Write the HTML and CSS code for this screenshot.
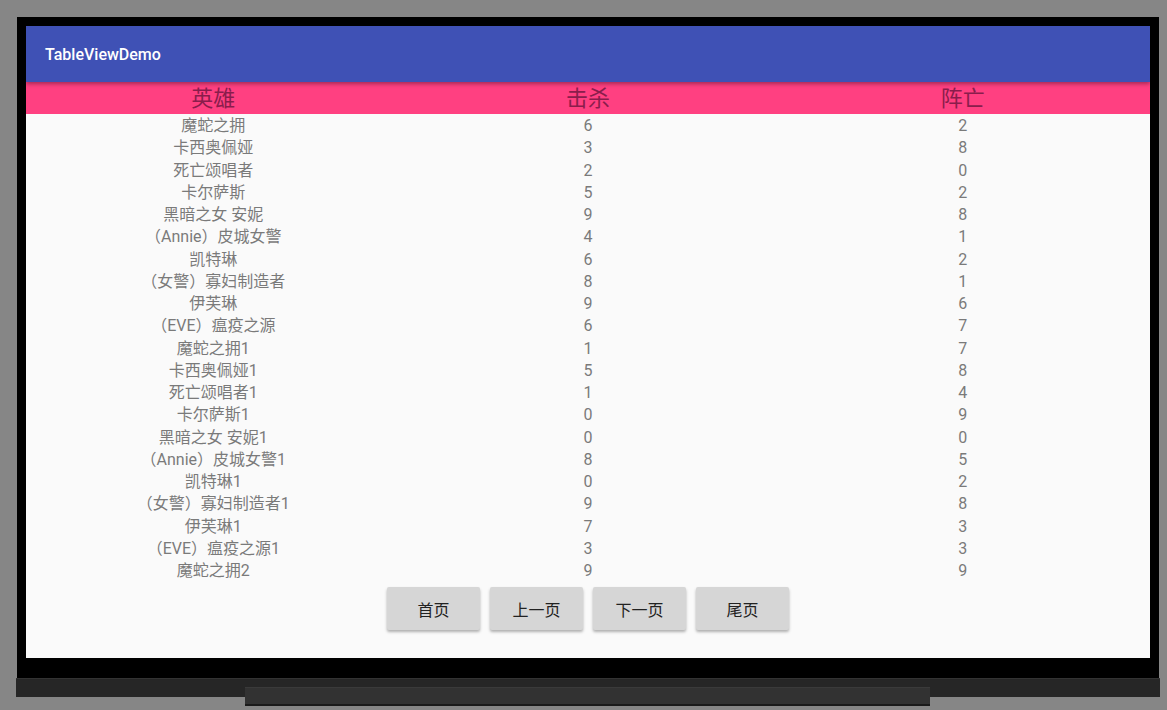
FILE: index.html
```html
<!DOCTYPE html>
<html>
<head>
<meta charset="utf-8">
<link rel="stylesheet" href="styles.css">
</head>
<body>
<div class="device">
  <div class="bezel">
    <div class="screen">
      <div class="toolbar">TableViewDemo</div>
      <div class="table-head">
        <div>英雄</div><div>击杀</div><div>阵亡</div>
      </div>
      <div class="table-body">
        <div class="row"><div>魔蛇之拥</div><div>6</div><div>2</div></div>
        <div class="row"><div>卡西奥佩娅</div><div>3</div><div>8</div></div>
        <div class="row"><div>死亡颂唱者</div><div>2</div><div>0</div></div>
        <div class="row"><div>卡尔萨斯</div><div>5</div><div>2</div></div>
        <div class="row"><div>黑暗之女 安妮</div><div>9</div><div>8</div></div>
        <div class="row"><div>（Annie）皮城女警</div><div>4</div><div>1</div></div>
        <div class="row"><div>凯特琳</div><div>6</div><div>2</div></div>
        <div class="row"><div>（女警）寡妇制造者</div><div>8</div><div>1</div></div>
        <div class="row"><div>伊芙琳</div><div>9</div><div>6</div></div>
        <div class="row"><div>（EVE）瘟疫之源</div><div>6</div><div>7</div></div>
        <div class="row"><div>魔蛇之拥1</div><div>1</div><div>7</div></div>
        <div class="row"><div>卡西奥佩娅1</div><div>5</div><div>8</div></div>
        <div class="row"><div>死亡颂唱者1</div><div>1</div><div>4</div></div>
        <div class="row"><div>卡尔萨斯1</div><div>0</div><div>9</div></div>
        <div class="row"><div>黑暗之女 安妮1</div><div>0</div><div>0</div></div>
        <div class="row"><div>（Annie）皮城女警1</div><div>8</div><div>5</div></div>
        <div class="row"><div>凯特琳1</div><div>0</div><div>2</div></div>
        <div class="row"><div>（女警）寡妇制造者1</div><div>9</div><div>8</div></div>
        <div class="row"><div>伊芙琳1</div><div>7</div><div>3</div></div>
        <div class="row"><div>（EVE）瘟疫之源1</div><div>3</div><div>3</div></div>
        <div class="row"><div>魔蛇之拥2</div><div>9</div><div>9</div></div>
      </div>
      <div class="pager">
        <button class="btn">首页</button>
        <button class="btn">上一页</button>
        <button class="btn">下一页</button>
        <button class="btn">尾页</button>
      </div>
    </div>
  </div>
  <div class="chin"></div>
  <div class="stand"></div>
</div>
</body>
</html>
```

FILE: styles.css
```css
html, body {
  margin: 0;
  padding: 0;
  background: #868686;
  width: 1167px;
  height: 710px;
  overflow: hidden;
  font-family: Roboto, "Noto Sans CJK SC", sans-serif;
}

.device {
  display: flex;
  flex-direction: column;
  margin: 17px 0 0 16px;
  width: 1144px;
}

.bezel {
  background: #000;
  padding: 9px 9px 20px 9px;
  margin-left: 1px;
  width: 1124px;
}

.screen {
  width: 1124px;
  height: 632px;
  background: #fafafa;
  display: flex;
  flex-direction: column;
}

.toolbar {
  height: 56px;
  background: #3f51b5;
  color: #fff;
  font-size: 16px;
  font-weight: 500;
  display: flex;
  align-items: center;
  padding-left: 19px;
  position: relative;
  z-index: 1;
  box-shadow: 0 2px 4px rgba(0, 0, 0, 0.35);
}

.table-head {
  display: grid;
  grid-template-columns: 1fr 1fr 1fr;
  height: 32px;
  background: #ff4081;
  color: #8a1d4c;
  font-size: 22px;
  line-height: 33px;
  text-align: center;
}

.table-body {
  display: flex;
  flex-direction: column;
  padding-top: 1px;
}

.row {
  display: grid;
  grid-template-columns: 1fr 1fr 1fr;
  height: 22.25px;
  line-height: 22.25px;
  font-size: 16px;
  color: #7a7a7a;
  text-align: center;
}

.pager {
  display: flex;
  justify-content: center;
  gap: 10px;
  margin-top: 5px;
}

.btn {
  width: 93px;
  height: 43px;
  border: none;
  border-radius: 2px;
  background: #d6d6d6;
  color: #222;
  font-family: Roboto, "Noto Sans CJK SC", sans-serif;
  font-size: 16px;
  box-shadow: 0 2px 3px rgba(0, 0, 0, 0.3);
  padding: 0;
}

.chin {
  height: 18px;
  background: #262626;
  border-top: 1px solid #333;
  width: 1144px;
}

.stand {
  margin-left: 229px;
  margin-top: -10px;
  width: 685px;
  height: 16px;
  background: #323232;
  border-bottom: 2px solid #1a1a1a;
  border-top: 1px solid #3a3a3a;
}
```
